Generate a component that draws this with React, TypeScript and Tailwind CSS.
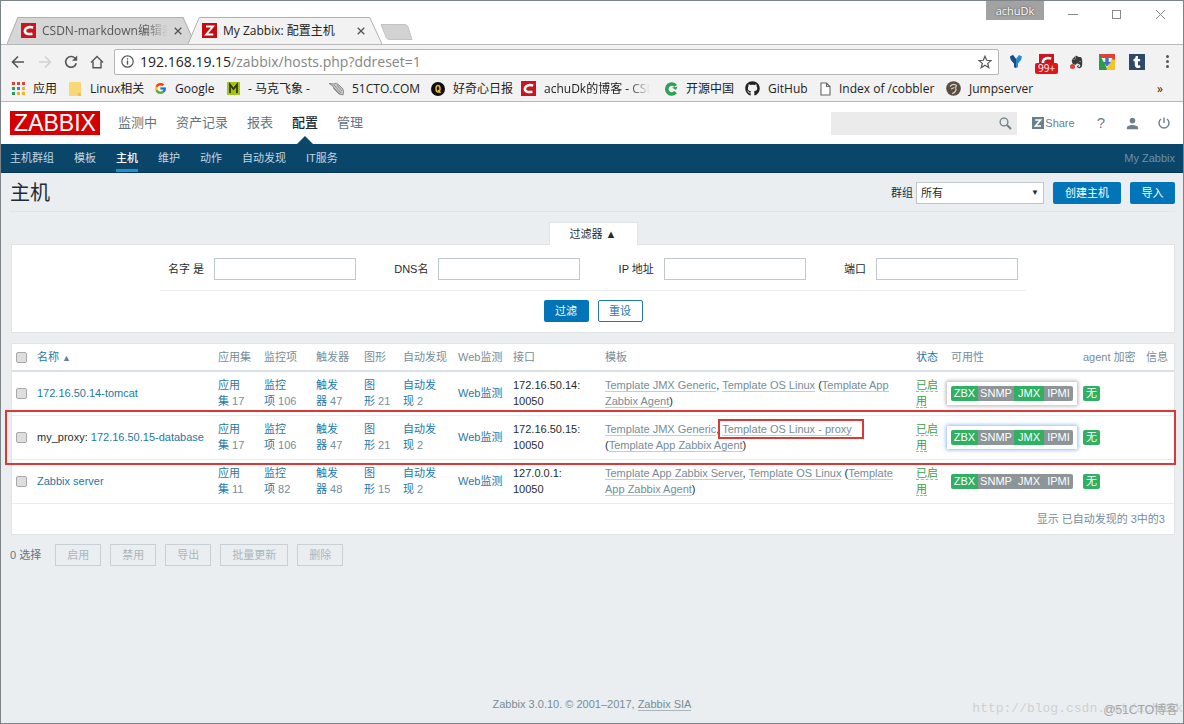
import type { ReactNode } from "react";
import clsx from "clsx";
import { FcGoogle } from "react-icons/fc";
import { FaEvernote, FaGithub, FaTumblr } from "react-icons/fa";
import { MdPerson } from "react-icons/md";

const Icons = {
  Back: () => (
    <svg width="14" height="14" viewBox="0 0 14 14" fill="none" stroke="currentColor" strokeWidth="1.6">
      <path d="M13 7H2M7 1.5 1.5 7 7 12.5" />
    </svg>
  ),
  Reload: () => (
    <svg width="14" height="14" viewBox="0 0 14 14" fill="none" stroke="currentColor" strokeWidth="1.6">
      <path d="M12.3 8.2A5.4 5.4 0 1 1 11 3.2" />
      <path d="M13.2 0.6V5.8H8z" fill="currentColor" stroke="none" />
    </svg>
  ),
  Home: () => (
    <svg width="14" height="14" viewBox="0 0 14 14" fill="none" stroke="currentColor" strokeWidth="1.4">
      <path d="M1 7.5 7 1.5 13 7.5M3 6.5V12.8H11V6.5" />
    </svg>
  ),
  Info: () => (
    <svg width="13" height="13" viewBox="0 0 13 13" fill="none" stroke="currentColor" strokeWidth="1.2">
      <circle cx="6.5" cy="6.5" r="5.7" />
      <path d="M6.5 5.6V9.8M6.5 3.2V4.6" strokeWidth="1.4" />
    </svg>
  ),
  Star: () => (
    <svg width="14" height="14" viewBox="0 0 14 14" fill="none" stroke="currentColor" strokeWidth="1.2">
      <path d="M7 1.2 8.7 5.3 13 5.6 9.7 8.4 10.8 12.7 7 10.3 3.2 12.7 4.3 8.4 1 5.6 5.3 5.3z" />
    </svg>
  ),
  Csdn: () => (
    <svg width="15" height="15" viewBox="0 0 16 16">
      <rect width="16" height="16" fill="#c9151e" />
      <path d="M13 4.8C8.5 3.6 4.8 4.6 4.2 8 3.7 11.3 7.5 12.4 12.2 11.4" fill="none" stroke="#fff" strokeWidth="2.8" />
    </svg>
  ),
  Zabbix: () => (
    <svg width="15" height="15" viewBox="0 0 15 15">
      <rect width="15" height="15" fill="#c80a10" />
      <path d="M4 3.5H11L4.2 11.5H11.3" fill="none" stroke="#fff" strokeWidth="1.9" />
    </svg>
  ),
  Close: () => (
    <svg width="8" height="8" viewBox="0 0 8 8" stroke="currentColor" strokeWidth="1.3">
      <path d="M.7.7 7.3 7.3M7.3.7.7 7.3" />
    </svg>
  ),
  Apps: () => (
    <svg width="13" height="13" viewBox="0 0 13 13">
      <path d="M0 0h3v3H0zM5 0h3v3H5zM10 0h3v3h-3z" fill="#dc4437" />
      <path d="M0 5h3v3H0z" fill="#2f9e56" />
      <path d="M5 5h3v3H5z" fill="#3b7de0" />
      <path d="M10 5h3v3h-3zM5 10h3v3H5zM10 10h3v3h-3z" fill="#efb320" />
      <path d="M0 10h3v3H0z" fill="#2f9e56" />
    </svg>
  ),
  Folder: () => (
    <svg width="13" height="14" viewBox="0 0 13 14">
      <path d="M0 1Q0 0 1 0H11Q12 0 12 1V14H1Q0 14 0 13z" fill="#f8d775" />
      <path d="M9 11H12V14H9z" fill="#eebf4f" />
    </svg>
  ),
  Maxiang: () => (
    <svg width="13" height="13" viewBox="0 0 13 13">
      <rect width="13" height="13" fill="#a5c21c" />
      <path d="M3 11V2.5L6.5 7 10 2.5V11" fill="none" stroke="#2c3608" strokeWidth="1.7" />
    </svg>
  ),
  Cto: () => (
    <svg width="15" height="14" viewBox="0 0 15 14" fill="none" stroke="#777">
      <path d="M0 1.5 5 2Q7 0 10 3L14 7Q15 10 14 13L10 12 5 7 4 4z" fill="#c9c9c9" strokeWidth=".8" />
      <path d="M5 3 12 11M8 3 13 9M5 6 11 12" strokeWidth=".7" />
    </svg>
  ),
  Qdaily: () => (
    <svg width="14" height="14" viewBox="0 0 14 14">
      <circle cx="7" cy="7" r="7" fill="#0d0d0d" />
      <ellipse cx="7" cy="6.7" rx="2" ry="3.2" fill="none" stroke="#e9b62c" strokeWidth="1.5" />
      <path d="M7 8 9.5 11" stroke="#e9b62c" strokeWidth="1.4" />
    </svg>
  ),
  Oschina: () => (
    <svg width="14" height="14" viewBox="0 0 14 14">
      <path d="M11.6 3.8A5 5 0 1 0 11.6 10.200" fill="none" stroke="#2fa157" strokeWidth="3.6" />
      <path d="M8 5.6 13.5 4.8 12 8z" fill="#2fa157" />
    </svg>
  ),
  Page: () => (
    <svg width="11" height="14" viewBox="0 0 11 14" fill="#fff" stroke="#666" strokeWidth="1.1">
      <path d="M1 1H6.5L10 4.5V13H1zM6.5 1V4.5H10" />
    </svg>
  ),
  Jump: () => (
    <svg width="15" height="15" viewBox="0 0 15 15">
      <circle cx="7.5" cy="7.5" r="7.3" fill="#5a4c40" />
      <path d="M4 5.5Q7 2 10.5 4.5 9 6 10 9 9 12 6 12.5M5 8 8.5 6.5" fill="none" stroke="#d8cfc4" strokeWidth="1.2" />
    </svg>
  ),
  Fork: () => (
    <svg width="12" height="13" viewBox="0 0 12 13">
      <path d="M0 1.5 3 0 6 4 9 0 12 1.5 11 5 8 8.5V12L6 13 4 12V8.5L1 5z" fill="#2b87cf" />
      <path d="M0 1.5 3 0 6 4V13L4 12V8.5L1 5z" fill="#1c4b85" />
    </svg>
  ),
  Download: () => (
    <svg width="16" height="16" viewBox="0 0 16 16">
      <rect width="16" height="16" fill="#f2c522" />
      <path d="M0 0H16V5H5L8 16H0z" fill="#2f9b48" />
      <path d="M0 0H16V5.5H4z" fill="#dd4335" />
      <path d="M2.5 4H13.500L8 14z" fill="#f3f3f3" />
      <path d="M6.3 3.8H9.7V8H12L8 12.5 4 8H6.3z" fill="#3c71c4" />
    </svg>
  ),
  Search: () => (
    <svg width="13" height="13" viewBox="0 0 13 13" fill="none" stroke="currentColor">
      <circle cx="5" cy="5" r="3.9" strokeWidth="1.3" />
      <path d="M8 8 12 12" strokeWidth="1.9" />
    </svg>
  ),
  Share: () => (
    <svg width="12" height="12" viewBox="0 0 12 12">
      <rect width="12" height="12" fill="#6a808d" />
      <path d="M3.2 3H8.6L3.4 9H9" fill="none" stroke="#fff" strokeWidth="1.6" />
    </svg>
  ),
  Power: () => (
    <svg width="12" height="12" viewBox="0 0 12 12" fill="none" stroke="currentColor" strokeWidth="1.4">
      <path d="M6 .5V6M3 2A5 5 0 1 0 9 2" />
    </svg>
  ),
};

const bookmarks: { label: string; width: string; icon: ReactNode; fade?: boolean }[] = [
  { label: "应用", width: "w-[57px]", icon: <Icons.Apps /> },
  { label: "Linux相关", width: "w-[85px]", icon: <Icons.Folder /> },
  { label: "Google", width: "w-[73px]", icon: <FcGoogle size={13} /> },
  { label: "- 马克飞象 -", width: "w-[102px]", icon: <Icons.Maxiang /> },
  { label: "51CTO.COM", width: "w-[102px]", icon: <Icons.Cto /> },
  { label: "好奇心日报", width: "w-[90px]", icon: <Icons.Qdaily /> },
  { label: "achuDk的博客 - CSD", width: "w-[143px]", icon: <Icons.Csdn />, fade: true },
  { label: "开源中国", width: "w-[81px]", icon: <Icons.Oschina /> },
  { label: "GitHub", width: "w-[75px]", icon: <FaGithub size={15} /> },
  { label: "Index of /cobbler", width: "w-[126px]", icon: <Icons.Page /> },
  { label: "Jumpserver", width: "w-[100px]", icon: <Icons.Jump /> },
];

const mainMenu = ["监测中", "资产记录", "报表", "配置", "管理"];
const subMenu = ["主机群组", "模板", "主机", "维护", "动作", "自动发现", "IT服务"];
const filters = [
  { id: "name", label: "名字 是" },
  { id: "dns", label: "DNS名" },
  { id: "ip", label: "IP 地址" },
  { id: "port", label: "端口" },
];
const actions = ["启用", "禁用", "导出", "批量更新", "删除"];

const columns = [
  { label: "应用集", width: "w-[46px]" },
  { label: "监控项", width: "w-[52px]" },
  { label: "触发器", width: "w-[48px]" },
  { label: "图形", width: "w-[39px]" },
  { label: "自动发现", width: "w-[55px]" },
  { label: "Web监测", width: "w-[55px]" },
  { label: "接口", width: "w-[92px]" },
  { label: "模板", width: "" },
  { label: "状态", width: "w-[35px]", sortable: true },
  { label: "可用性", width: "w-[132px]" },
  { label: "agent 加密", width: "w-[63px]" },
  { label: "信息", width: "w-[32px]" },
];

const Tpl = ({ children }: { children: ReactNode }) => (
  <a href="#" className="border-b border-[#c5cdd2] text-[#768d99]">
    {children}
  </a>
);

const hosts = [
  {
    proxy: "",
    name: "172.16.50.14-tomcat",
    counts: [17, 106, 47, 21, 2],
    ip: "172.16.50.14:",
    jmx: true,
    frame: "bg-white p-1 -ml-1 shadow-[0_0_4px_1px_#b5b0b0]",
    templates: (
      <>
        <Tpl>Template JMX Generic</Tpl>, <Tpl>Template OS Linux</Tpl> (<Tpl>Template App Zabbix Agent</Tpl>)
      </>
    ),
  },
  {
    proxy: "my_proxy: ",
    name: "172.16.50.15-database",
    counts: [17, 106, 47, 21, 2],
    ip: "172.16.50.15:",
    jmx: true,
    frame: "bg-white p-1 -ml-1 shadow-[0_0_4px_1px_#8fbcf0]",
    templates: (
      <>
        <Tpl>Template JMX Generic</Tpl>,{" "}
        <span className="relative">
          <Tpl>Template OS Linux - proxy</Tpl>
          <span className="pointer-events-none absolute -top-1 -right-3 -bottom-1 -left-1 border-2 border-[#d93a37]" />
        </span>
        <br />(<Tpl>Template App Zabbix Agent</Tpl>)
      </>
    ),
  },
  {
    proxy: "",
    name: "Zabbix server",
    counts: [11, 82, 48, 15, 2],
    ip: "127.0.0.1:",
    jmx: false,
    frame: "",
    templates: (
      <>
        <Tpl>Template App Zabbix Server</Tpl>, <Tpl>Template OS Linux</Tpl> (<Tpl>Template App Zabbix Agent</Tpl>)
      </>
    ),
  },
];

const counted = ["应用集", "监控项", "触发器", "图形", "自动发现"];

const link = "text-[#1f78a6]";

function CheckBox({ label }: { label: string }) {
  return (
    <input
      type="checkbox"
      aria-label={label}
      className="block size-[11px] appearance-none rounded-xs border border-[#a9a9a9] bg-[#dedede]"
    />
  );
}

function Tab({ active, title, icon }: { active?: boolean; title: string; icon: ReactNode }) {
  return (
    <div className={clsx("relative flex h-[27px] items-center pl-[14px]", active ? "-ml-[7px] w-[194px]" : "w-[188px]")}>
      <svg className="absolute inset-0 size-full" viewBox="0 0 190 27" preserveAspectRatio="none">
        <path
          d="M0 27 11 .5H178L190 27"
          fill={active ? "#f2f2f2" : "#d6d6d6"}
          stroke="#b0b0b0"
          vectorEffect="non-scaling-stroke"
        />
      </svg>
      <span className="relative">{icon}</span>
      <span
        className={clsx(
          "relative ml-[6px] overflow-hidden text-[12px] whitespace-nowrap",
          active ? "w-[124px] text-[#222]" : "w-[126px] mask-r-from-80% text-[#555]"
        )}
      >
        {title}
      </span>
      <button aria-label="关闭标签页" className={clsx("relative text-[#555]", active ? "ml-[10px]" : "ml-[6px]")}>
        <Icons.Close />
      </button>
    </div>
  );
}

function Browser() {
  return (
    <header className="bg-white font-['Open_Sans','Noto_Sans_CJK_SC',sans-serif]">
      <div className="flex h-[44px] items-start justify-between border-b border-[#b9b9b9] pl-[6px]">
        <div className="flex pt-[16px]">
          <Tab title="CSDN-markdown编辑器" icon={<Icons.Csdn />} />
          <Tab active title="My Zabbix: 配置主机" icon={<Icons.Zabbix />} />
          <button aria-label="新标签页" className="-ml-[2px] pt-[3px]">
            <svg width="33" height="16" viewBox="0 0 33 16">
              <path d="M1 .5H25Q27 .5 28 3L32 15.5H9Q7 15.5 6 13z" fill="#d2d2d2" stroke="#c2c2c2" />
            </svg>
          </button>
        </div>
        <div className="flex items-start pr-[18px] text-[#8a8a8a]">
          <span className="mr-[24px] h-[19px] w-[58px] bg-[#a2a2a2] text-center text-[11px] leading-[20px] text-white text-shadow-[0_0_2px_#333]">
            achuDk
          </span>
          <button aria-label="最小化" className="mt-[13px] mr-[34px] h-px w-[10px] bg-[#8a8a8a]" />
          <button aria-label="最大化" className="mt-[9px] mr-[35px] size-[9px] border border-[#8a8a8a]" />
          <button aria-label="关闭" className="mt-[9px]">
            <svg width="9" height="9" viewBox="0 0 9 9" stroke="currentColor">
              <path d="M0 0 9 9M9 0 0 9" />
            </svg>
          </button>
        </div>
      </div>

      <div className="flex h-[33px] items-center bg-[#f2f2f2] pr-[14px] pl-[10px] text-[#555]">
        <button aria-label="后退" className="mr-[13px]"><Icons.Back /></button>
        <button aria-label="前进" className="mr-[12px] rotate-180 text-[#d2d2d2]"><Icons.Back /></button>
        <button aria-label="重新加载" className="mr-[12px]"><Icons.Reload /></button>
        <button aria-label="主页" className="mr-[10px]"><Icons.Home /></button>
        <div className="flex h-[26px] flex-1 items-center rounded-xs border border-[#b5b5b5] bg-white px-[6px]">
          <Icons.Info />
          <a href="#" className="ml-[6px] flex-1 text-[14px] text-[#858585]">
            <span className="text-[#222]">192.168.19.15</span>/zabbix/hosts.php?ddreset=1
          </a>
          <button aria-label="收藏"><Icons.Star /></button>
        </div>
        <div className="ml-[11px] flex items-center">
          <button aria-label="分支" className="mr-[17px]"><Icons.Fork /></button>
          <button aria-label="CSDN" className="relative mr-[16px]">
            <Icons.Csdn />
            <span className="absolute top-[9px] -left-1 rounded-xs bg-[#e3131b] px-[3px] text-[10px] leading-[11px] text-white">
              99+
            </span>
          </button>
          <button aria-label="Evernote" className="relative mr-[15px] text-[#3a3a3a]">
            <FaEvernote size={14} />
            <span className="absolute bottom-0 left-0 size-[5px] rounded-full bg-[#e0403c]" />
          </button>
          <button aria-label="下载" className="mr-[14px]"><Icons.Download /></button>
          <button aria-label="Tumblr" className="mr-[21px] flex size-[16px] items-center justify-center bg-[#2f4a68] text-white">
            <FaTumblr size={12} />
          </button>
          <button aria-label="菜单" className="flex flex-col gap-[2px]">
            <span className="size-[3px] rounded-full bg-[#555]" />
            <span className="size-[3px] rounded-full bg-[#555]" />
            <span className="size-[3px] rounded-full bg-[#555]" />
          </button>
        </div>
      </div>

      <nav className="flex h-[24px] items-center border-b border-[#b9b9b9] bg-[#f2f2f2] pr-[20px] pb-[2px] pl-[11px] text-[12px] text-[#222]">
        {bookmarks.map((b) => (
          <a key={b.label} href="#" className={clsx("flex shrink-0 items-center gap-2 whitespace-nowrap", b.width)}>
            <span className="shrink-0">{b.icon}</span>
            <span className={clsx(b.fade && "w-[106px] overflow-hidden mask-r-from-80%")}>{b.label}</span>
          </a>
        ))}
        <button aria-label="更多书签" className="ml-auto leading-none">»</button>
      </nav>
    </header>
  );
}

function PageHeader() {
  return (
    <>
      <div className="flex h-[42px] items-center bg-white pr-[13px] pl-[9px]">
        <a href="#" className="flex h-[24px] w-[90px] items-center justify-center bg-[#d40000] text-[23px] text-white">
          ZABBIX
        </a>
        <nav className="ml-[18px] flex h-full items-center gap-[19px] text-[13px] text-[#5f7682]">
          {mainMenu.map((m) => (
            <a
              key={m}
              href="#"
              className={clsx("relative flex h-full items-center", m === "配置" && "font-medium text-[#1f2c33]")}
            >
              {m}
              {m === "配置" && (
                <span className="absolute bottom-0 left-1/2 -translate-x-1/2 border-x-8 border-b-8 border-x-transparent border-b-[#0a466a]" />
              )}
            </a>
          ))}
        </nav>
        <div className="ml-auto flex items-center text-[#6a808d]">
          <div className="relative mr-[15px]">
            <input type="text" aria-label="搜索" className="block h-[23px] w-[186px] bg-[#ebebeb] px-2 text-[11px]" />
            <button aria-label="搜索" className="absolute top-[5px] right-[5px]"><Icons.Search /></button>
          </div>
          <a href="#" className="mr-[22px] flex items-center gap-px text-[11px]">
            <Icons.Share />
            Share
          </a>
          <a href="#" className="mr-[19px] text-[15px]">?</a>
          <a href="#" aria-label="用户" className="mr-[17px]"><MdPerson size={17} /></a>
          <a href="#" aria-label="退出"><Icons.Power /></a>
        </div>
      </div>
      <div className="flex h-[29px] items-center border-b border-[#073753] bg-[#0a466a] pr-[8px] pl-[9px] text-[11px] text-[#c4d6e2]">
        <nav className="flex h-full gap-5">
          {subMenu.map((m) => (
            <a
              key={m}
              href="#"
              className={clsx(
                "flex items-center border-b-3 pt-[3px]",
                m === "主机" ? "border-[#1f8fd0] font-medium text-white" : "border-transparent"
              )}
            >
              {m}
            </a>
          ))}
        </nav>
        <span className="ml-auto text-[#6b91a9]">My Zabbix</span>
      </div>
    </>
  );
}

function Filter() {
  return (
    <form className="mr-[8px] ml-[10px] mt-[10px] flex flex-col items-center">
      <button type="button" className="relative -mb-px h-[23px] w-[89px] border border-b-0 border-[#dfe4e7] bg-white">
        过滤器 ▲
      </button>
      <div className="flex w-full flex-col items-center border border-[#dfe4e7] bg-white pt-[13px] pb-[10px]">
        <div className="flex w-full max-w-[866px] justify-between border-b border-[#ebeef0] px-2 pb-[10px]">
          {filters.map((f) => (
            <div key={f.id} className="flex items-center gap-[10px]">
              <label htmlFor={f.id}>{f.label}</label>
              <input id={f.id} type="text" className="h-[22px] w-[142px] border border-[#c0c8cc] bg-white px-1" />
            </div>
          ))}
        </div>
        <div className="mt-[9px] flex gap-[9px]">
          <button type="button" className="h-[22px] w-[45px] rounded-xs bg-[#0275b8] text-white">过滤</button>
          <button type="button" className="h-[22px] w-[45px] rounded-xs border border-[#1f78a6] bg-white text-[#1f78a6]">
            重设
          </button>
        </div>
      </div>
    </form>
  );
}

function Availability({ jmx, frame }: { jmx: boolean; frame: string }) {
  return (
    <span className={clsx("inline-flex align-middle leading-[15px] text-white", frame)}>
      <span className="w-[27px] rounded-l-xs bg-[#2fb062] text-center">ZBX</span>
      <span className="w-[36px] bg-[#8d9599] text-center">SNMP</span>
      <span className={clsx("w-[30px] text-center", jmx ? "bg-[#2fb062]" : "bg-[#8d9599]")}>JMX</span>
      <span className="w-[29px] rounded-r-xs bg-[#8d9599] text-center">IPMI</span>
    </span>
  );
}

function HostTable() {
  return (
    <div className="relative mt-[10px] mr-[8px] ml-[10px] border border-[#dfe4e7] bg-white">
      <table className="w-full table-fixed text-left">
        <thead>
          <tr className="h-[27px] border-b-2 border-[#d8e1e5] text-[#768d99]">
            <th className="w-[21px] pl-1"><CheckBox label="全选" /></th>
            <th className="w-[181px] pl-1 font-normal">
              <a href="#" className={link}>名称 <span className="text-[9px] text-[#6a808d]">▲</span></a>
            </th>
            {columns.map((c) => (
              <th key={c.label} className={clsx("pl-1 font-normal whitespace-nowrap", c.width)}>
                {c.sortable ? <a href="#" className={link}>{c.label}</a> : c.label}
              </th>
            ))}
          </tr>
        </thead>
        <tbody>
          {hosts.map((h) => (
            <tr key={h.name} className="h-[44px] border-b border-[#ebeef0]">
              <td className="pl-1"><CheckBox label={h.name} /></td>
              <td className="pl-1 whitespace-nowrap">
                {h.proxy}
                <a href="#" className={link}>{h.name}</a>
              </td>
              {h.counts.map((n, i) => (
                <td key={counted[i]} className="pl-1">
                  <a href="#" className={link}>{counted[i]}</a>
                  <span className="text-[#768d99]">{"\u00a0"}{n}</span>
                </td>
              ))}
              <td className="pl-1 whitespace-nowrap"><a href="#" className={link}>Web监测</a></td>
              <td className="pl-1">{h.ip}<br />10050</td>
              <td className="pr-1 pl-1">{h.templates}</td>
              <td className="pl-1">
                <a href="#" className="border-b border-dashed border-[#8fc592] text-[#429e47]">已启用</a>
              </td>
              <td className="pl-1"><Availability jmx={h.jmx} frame={h.frame} /></td>
              <td className="pl-1">
                <span className="inline-block rounded-xs bg-[#2fb062] px-[3px] leading-[15px] text-white">无</span>
              </td>
              <td />
            </tr>
          ))}
        </tbody>
      </table>
      <p className="pr-[9px] text-right leading-[30px] text-[#768d99]">显示 已自动发现的 3中的3</p>
      <div className="pointer-events-none absolute top-[66px] -right-[2px] -left-[7px] h-[55px] border-2 border-[#d93a37]" />
    </div>
  );
}

export default function App() {
  return (
    <div className="relative flex min-h-screen flex-col border border-[#7d8488] bg-[#ebeef0] font-['Liberation_Sans','Noto_Sans_CJK_SC',sans-serif] text-[11px] leading-[16px] text-[#1f2c33]">
      <Browser />
      <PageHeader />
      <main className="flex-1">
        <div className="mr-[8px] ml-[9px] flex h-[39px] items-center border-b border-[#dfe4e7] pt-[2px]">
          <h1 className="text-[20px]">主机</h1>
          <label htmlFor="group" className="mr-[3px] ml-auto">群组</label>
          <div className="relative mr-[9px]">
            <select id="group" className="block h-[22px] w-[128px] appearance-none border border-[#c0c8cc] bg-white px-1">
              <option>所有</option>
            </select>
            <span className="pointer-events-none absolute top-[3px] right-[5px] text-[8px]">▼</span>
          </div>
          <button className="mr-[9px] h-[22px] w-[68px] rounded-xs bg-[#0275b8] text-white">创建主机</button>
          <button className="h-[22px] w-[45px] rounded-xs bg-[#0275b8] text-white">导入</button>
        </div>
        <Filter />
        <HostTable />
        <div className="mt-[9px] flex items-center gap-[9px] pl-[9px] text-[#5f7682]">
          <span className="mr-[5px]">0 选择</span>
          {actions.map((a) => (
            <button key={a} disabled className="h-[22px] border border-[#c8d0d4] px-[11px] text-[#a9b6bd]">
              {a}
            </button>
          ))}
        </div>
      </main>
      <footer className="pb-[11px] text-center text-[#768d99]">
        Zabbix 3.0.10. © 2001–2017, <a href="#" className="border-b border-[#a9b6bd]">Zabbix SIA</a>
      </footer>
      <span className="absolute right-0 bottom-[6px] font-['Liberation_Mono',monospace] text-[13px] text-[#cdd1d3]">
        http://blog.csdn.net/achuDk
      </span>
      <span className="absolute right-[5px] bottom-[5px] text-[12px] text-[#a3a7a9]">@51CTO博客</span>
    </div>
  );
}
